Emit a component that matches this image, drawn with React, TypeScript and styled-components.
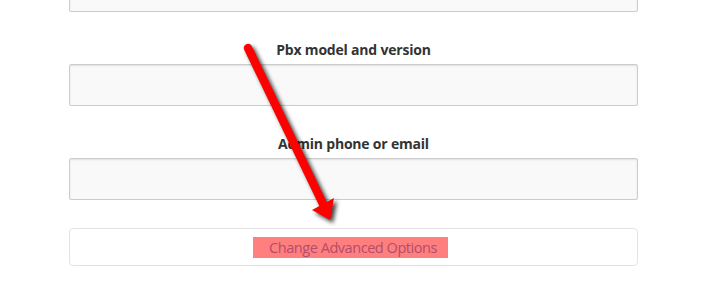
import React from "react"
import styled, {createGlobalStyle} from "styled-components"

const GlobalStyle = createGlobalStyle`
    html, body {
        margin: 0;
        padding: 0;
        background: #ffffff;
        font-family: "Open Sans", "Liberation Sans", sans-serif;
    }
`

const Page = styled.div`
    position: relative;
    width: 709px;
    height: 284px;
    overflow: hidden;
`

const Form = styled.div`
    display: flex;
    flex-direction: column;
    width: 569px;
    margin: -30px 0 0 69px;
`

const Field = styled.div<{ readonly first?: boolean }>`
    display: flex;
    flex-direction: column;
    margin-top: ${({first}) => first ? "0" : "28px"};
`

const Label = styled.label`
    text-align: center;
    font-size: 14px;
    font-weight: 700;
    line-height: 20px;
    color: #333333;
    margin-bottom: 4px;
    letter-spacing: -0.2px;
`

const Input = styled.input`
    box-sizing: border-box;
    height: 42px;
    width: 100%;
    margin: 0;
    background: #f9f9f9;
    border: 1px solid #cccccc;
    border-radius: 2px;
    box-shadow: inset 0 1px 2px rgba(0, 0, 0, 0.1);
    outline: none;
`

const AdvancedBox = styled.div`
    box-sizing: border-box;
    height: 38px;
    margin-top: 28px;
    border: 1px solid #e3e3e3;
    border-radius: 4px;
    display: flex;
    align-items: center;
    justify-content: center;
`

const AdvancedLink = styled.span`
    display: inline-block;
    background: #ff7f7f;
    color: #b24d6b;
    font-size: 14.5px;
    line-height: 21px;
    padding: 0 11px 0 16px;
    margin-right: 6px;
    letter-spacing: -0.45px;
`

const ArrowLayer = styled.svg`
    position: absolute;
    left: 0;
    top: 0;
    pointer-events: none;
    filter: drop-shadow(3px 3px 2px rgba(0, 0, 0, 0.75));
`

const Arrow = () => <ArrowLayer width="709" height="284" viewBox="0 0 709 284">
    <line x1="248" y1="48" x2="324" y2="206" stroke="#ff0000" strokeWidth="8.5" strokeLinecap="round"/>
    <polygon points="312,210 334,198 330,220" fill="#ff0000"/>
</ArrowLayer>

export default function App() {
    return <Page>
        <GlobalStyle/>
        <Form>
            <Field first>
                <Input/>
            </Field>
            <Field>
                <Label>Pbx model and version</Label>
                <Input/>
            </Field>
            <Field>
                <Label>Admin phone or email</Label>
                <Input/>
            </Field>
            <AdvancedBox>
                <AdvancedLink>Change Advanced Options</AdvancedLink>
            </AdvancedBox>
        </Form>
        <Arrow/>
    </Page>
}
